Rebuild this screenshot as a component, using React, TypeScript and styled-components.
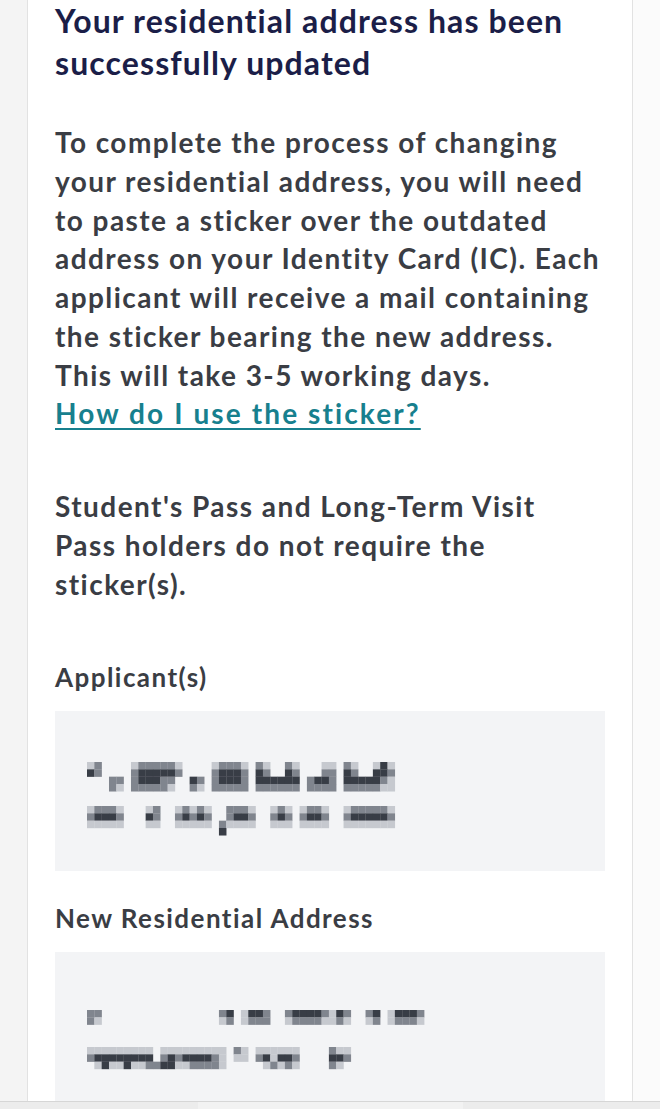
import React from "react";
import styled, { createGlobalStyle } from "styled-components";

const GlobalStyle = createGlobalStyle`
  html, body {
    margin: 0;
    padding: 0;
    height: 100%;
    overflow: hidden;
  }
  body {
    font-family: "Lato", "Noto Sans", sans-serif;
    background: #fafafa;
  }
`;

const Page = styled.div`
  height: 1109px;
  display: flex;
  flex-direction: column;
`;

const Viewport = styled.div`
  flex: 1;
  min-height: 0;
  overflow: hidden;
  display: flex;
  background: linear-gradient(to right, #f4f4f4 0, #f4f4f4 27px, #fbfbfb 27px);
`;

const Card = styled.main`
  margin-left: 27px;
  width: 606px;
  box-sizing: border-box;
  background: #ffffff;
  border-left: 1px solid #e2e2e2;
  border-right: 1px solid #e2e2e2;
  padding: 0 27px;
  display: flex;
  flex-direction: column;
`;

const Title = styled.h1`
  margin: 0;
  font-size: 32px;
  line-height: 42px;
  font-weight: 700;
  color: #1b1e48;
  letter-spacing: 1.1px;
  white-space: nowrap;
`;

const Paragraph = styled.p<{ $top: number }>`
  margin: ${(p) => p.$top}px 0 0;
  font-size: 28px;
  line-height: 38.75px;
  font-weight: 700;
  color: #3a3d44;
  letter-spacing: 1.45px;
  white-space: nowrap;
`;

const Link = styled.a`
  color: #17808e;
  letter-spacing: 2.1px;
  text-decoration: underline;
  text-decoration-thickness: 2px;
  text-underline-offset: 4px;
`;

const Label = styled.h3<{ $top: number }>`
  margin: ${(p) => p.$top}px 0 0;
  font-size: 26px;
  line-height: 36px;
  font-weight: 700;
  color: #3a3d44;
  letter-spacing: 1.45px;
`;

const InfoBox = styled.div<{ $padTop: number; $height?: number }>`
  margin-top: 16px;
  background: #f3f4f6;
  padding: ${(p) => p.$padTop}px 32px 0;
  box-sizing: border-box;
  height: ${(p) => (p.$height ? `${p.$height}px` : "auto")};
  flex: ${(p) => (p.$height ? "none" : "1")};
`;

const BottomBar = styled.div`
  height: 7px;
  flex: none;
  border-top: 1px solid #d6d6d6;
  background: #ececec;
  display: flex;
`;

const BarHandle = styled.div`
  margin-left: 198px;
  width: 265px;
  background: #f2f2f2;
`;

const SHADES: Record<string, string> = {
  "1": "#c6c9cf",
  "2": "#80858e",
  "3": "#383d46",
};

const PX = 7.33;

type Segment = { c: number; rows: string[] };
type MosaicLine = { top: number; segments: Segment[] };

// redacted text, drawn as the mosaic blocks seen in the screenshot
const Mosaic = ({ lines }: { lines: MosaicLine[] }) => {
  const rects: React.ReactNode[] = [];
  let maxX = 0;
  let maxY = 0;
  lines.forEach((line, li) =>
    line.segments.forEach((seg, si) =>
      seg.rows.forEach((row, ri) =>
        row.split("").forEach((ch, ci) => {
          if (!SHADES[ch]) return;
          const x = (seg.c + ci) * PX;
          const y = line.top + ri * PX;
          maxX = Math.max(maxX, x + PX);
          maxY = Math.max(maxY, y + PX);
          rects.push(
            <rect
              key={`${li}-${si}-${ri}-${ci}`}
              x={x}
              y={y}
              width={PX + 0.2}
              height={PX + 0.2}
              fill={SHADES[ch]}
            />
          );
        })
      )
    )
  );
  return (
    <svg width={maxX + 1} height={maxY + 1} style={{ display: "block" }}>
      {rects}
    </svg>
  );
};

const applicantLines: MosaicLine[] = [
  {
    top: 0,
    segments: [
      { c: 0, rows: ["12", "32", "  ", "  "] },
      { c: 3, rows: ["  ", "  ", "22", "21"] },
      { c: 6, rows: ["1222221", "2333332", "233322 ", "222221 "] },
      { c: 14, rows: ["  ", "  ", "32", "21"] },
      { c: 17, rows: ["12221", "23332", "23332", "22222"] },
      { c: 23, rows: ["21  21", "32  32", "333333", "222222"] },
      { c: 30, rows: ["  11", "  22", "2332", "2222"] },
      { c: 35, rows: ["21  131", "32  332", "3333321", "2222211"] },
    ],
  },
  {
    top: 44,
    segments: [
      { c: 0, rows: ["12221", "23332", "11111"] },
      { c: 8, rows: ["12", "32", "11"] },
      { c: 12, rows: ["12121", "23232", "11111"] },
      { c: 18, rows: [" ", " ", "2", "3"] },
      { c: 19, rows: ["2221", "2332", "1111"] },
      { c: 25, rows: ["121", "232", "111"] },
      { c: 29, rows: ["1221", "2332", "1111"] },
      { c: 35, rows: ["1222221", "2333332", "1111111"] },
    ],
  },
];

const addressLines: MosaicLine[] = [
  {
    top: 0,
    segments: [
      { c: 0, rows: ["22", "21"] },
      { c: 18, rows: ["23", "12"] },
      { c: 21, rows: ["1332", "1222"] },
      { c: 27, rows: ["233332132", "122221121"] },
      { c: 38, rows: ["23 13332", "12 12221"] },
    ],
  },
  {
    top: 37,
    segments: [
      { c: 0, rows: ["111111111 11", "233333333 23", " 13113112233"] },
      { c: 12, rows: ["1111111", "2333321", "1122221"] },
      { c: 20, rows: ["21", "11", "  "] },
      { c: 23, rows: ["111111", "231332", " 12121"] },
      { c: 33, rows: ["211", "332", "21 "] },
    ],
  },
];

export default function App() {
  return (
    <Page>
      <GlobalStyle />
      <Viewport>
        <Card>
          <Title>
            Your residential address has been
            <br />
            successfully updated
          </Title>
          <Paragraph $top={39}>
            To complete the process of changing
            <br />
            your residential address, you will need
            <br />
            to paste a sticker over the outdated
            <br />
            address on your Identity Card (IC). Each
            <br />
            applicant will receive a mail containing
            <br />
            the sticker bearing the new address.
            <br />
            This will take 3-5 working days.
            <br />
            <Link href="#">How do I use the sticker?</Link>
          </Paragraph>
          <Paragraph $top={54}>
            Student's Pass and Long-Term Visit
            <br />
            Pass holders do not require the
            <br />
            sticker(s).
          </Paragraph>
          <Label $top={56}>Applicant(s)</Label>
          <InfoBox $padTop={51} $height={160}>
            <Mosaic lines={applicantLines} />
          </InfoBox>
          <Label $top={29}>New Residential Address</Label>
          <InfoBox $padTop={58}>
            <Mosaic lines={addressLines} />
          </InfoBox>
        </Card>
      </Viewport>
      <BottomBar>
        <BarHandle />
      </BottomBar>
    </Page>
  );
}
